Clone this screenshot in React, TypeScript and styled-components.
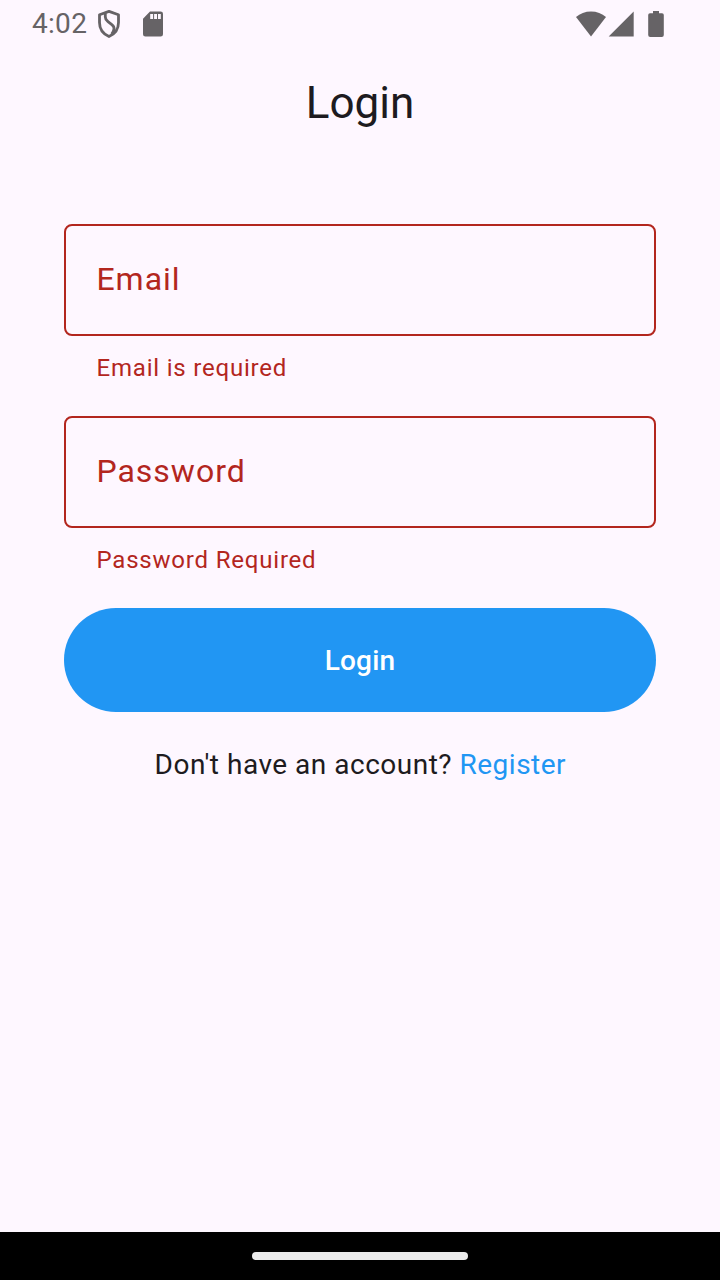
import React from "react";
import styled, { createGlobalStyle } from "styled-components";

const color = {
  surface: "#fef7ff",
  text: "#1d1b20",
  error: "#b3261e",
  primary: "#2196f3",
  status: "#666366",
};

const GlobalStyle = createGlobalStyle`
  *, *::before, *::after { box-sizing: border-box; }
  body { margin: 0; background: ${color.surface}; }
`;

const Screen = styled.div`
  display: flex;
  flex-direction: column;
  width: 720px;
  height: 1280px;
  overflow: hidden;
  background: ${color.surface};
  color: ${color.text};
  font-family: Roboto, "Liberation Sans", sans-serif;
`;

const StatusBar = styled.header`
  display: flex;
  align-items: center;
  justify-content: space-between;
  height: 48px;
  padding: 0 56px 0 32px;
  color: ${color.status};
`;

const StatusGroup = styled.div`
  display: flex;
  align-items: center;
  height: 48px;
`;

const Clock = styled.time`
  width: 65px;
  font-size: 28px;
  line-height: 48px;
  letter-spacing: 0.3px;
`;

const StatusIcon = styled.svg<{ $gap?: number }>`
  display: block;
  flex: none;
  margin-left: ${({ $gap = 0 }) => $gap}px;
  fill: currentColor;
`;

const AppBar = styled.div`
  display: flex;
  align-items: center;
  justify-content: center;
  height: 112px;
  padding-bottom: 2px;
`;

const Title = styled.h1`
  margin: 0;
  font-size: 44px;
  font-weight: 400;
  line-height: 56px;
`;

const Form = styled.form`
  display: flex;
  flex: 1;
  flex-direction: column;
  gap: 32px;
  padding: 64px 64px 0;
`;

const Field = styled.div`
  display: flex;
  flex-direction: column;
  gap: 16px;
  color: ${color.error};
`;

const FieldBox = styled.label`
  display: flex;
  align-items: center;
  height: 112px;
  padding: 0 30.4px 2px;
  border: 2px solid currentColor;
  border-radius: 8px;
  font-size: 32px;
  line-height: 48px;
  letter-spacing: 1px;
`;

const FieldError = styled.p`
  margin: 0;
  padding: 0 32.5px;
  font-size: 24px;
  line-height: 32px;
  letter-spacing: 0.8px;
`;

const SubmitButton = styled.button`
  height: 104px;
  padding: 2px 0 0;
  border: 0;
  border-radius: 52px;
  background: ${color.primary};
  color: #fff;
  font: 500 28px/40px Roboto, "Liberation Sans", sans-serif;
  letter-spacing: 0.2px;
`;

const RegisterPrompt = styled.p`
  margin: 0;
  padding: 1px 0 0 0.7px;
  font-size: 28px;
  line-height: 40px;
  letter-spacing: 0.5px;
  text-align: center;
`;

const RegisterLink = styled.a`
  color: ${color.primary};
`;

const NavigationBar = styled.footer`
  display: flex;
  align-items: center;
  justify-content: center;
  height: 48px;
  background: #000;
`;

const HomeHandle = styled.div`
  width: 216px;
  height: 8px;
  border-radius: 4px;
  background: #ebebeb;
`;

const fields = [
  { label: "Email", error: "Email is required" },
  { label: "Password", error: "Password Required" },
];

export default function App() {
  return (
    <Screen>
      <GlobalStyle />
      <StatusBar>
        <StatusGroup>
          <Clock>4:02</Clock>
          <StatusIcon width="24" height="30" viewBox="0 0 24 30">
            <path
              d="M12 2.4 L21.5 5.8 V13.5 C21.5 20 17.7 25 12 27.6 C6.3 25 2.5 20 2.5 13.5 V5.8 Z"
              fill="none"
              stroke="currentColor"
              strokeWidth="2.8"
              strokeLinejoin="round"
            />
            <path
              d="M8.3 4.2 V8 C8.3 10.3 9.2 11.3 11 12.7 L14.8 15.6 C16.6 17 17.2 18.2 17 20 C16.8 22 16 23.6 14.6 25.2"
              fill="none"
              stroke="currentColor"
              strokeWidth="2.8"
            />
          </StatusIcon>
          <StatusIcon width="22" height="26" viewBox="0 0 22 26" $gap={21}>
            <path
              fillRule="evenodd"
              d="M8 .5 H18.6 Q21 .5 21 2.8 V23.2 Q21 25.6 18.6 25.6 H3.4 Q1 25.6 1 23.2 V7.8 Z M8.2 3 V8 H11.1 V3 Z M12.1 3 V8 H15 V3 Z M16 3 V8 H18.8 V3 Z"
            />
          </StatusIcon>
        </StatusGroup>
        <StatusGroup>
          <StatusIcon width="30" height="26" viewBox="0 0 30 26">
            <path d="M0 6 C4 2.5 9.2 .5 15 .5 C20.8 .5 26 2.5 30 6 L15 25.5 Z" />
          </StatusIcon>
          <StatusIcon width="26" height="26" viewBox="0 0 26 26" $gap={2}>
            <path d="M25.7 .5 V25.5 H.7 Z" />
          </StatusIcon>
          <StatusIcon width="16" height="26" viewBox="0 0 16 26" $gap={14}>
            <path d="M5 0 H11 V2.2 H14 Q15.8 2.2 15.8 4 V24 Q15.8 26 13.8 26 H2.2 Q.2 26 .2 24 V4 Q.2 2.2 2 2.2 H5 Z" />
          </StatusIcon>
        </StatusGroup>
      </StatusBar>
      <AppBar>
        <Title>Login</Title>
      </AppBar>
      <Form>
        {fields.map(({ label, error }) => (
          <Field key={label}>
            <FieldBox>{label}</FieldBox>
            <FieldError>{error}</FieldError>
          </Field>
        ))}
        <SubmitButton type="button">Login</SubmitButton>
        <RegisterPrompt>
          Don't have an account? <RegisterLink>Register</RegisterLink>
        </RegisterPrompt>
      </Form>
      <NavigationBar>
        <HomeHandle />
      </NavigationBar>
    </Screen>
  );
}
